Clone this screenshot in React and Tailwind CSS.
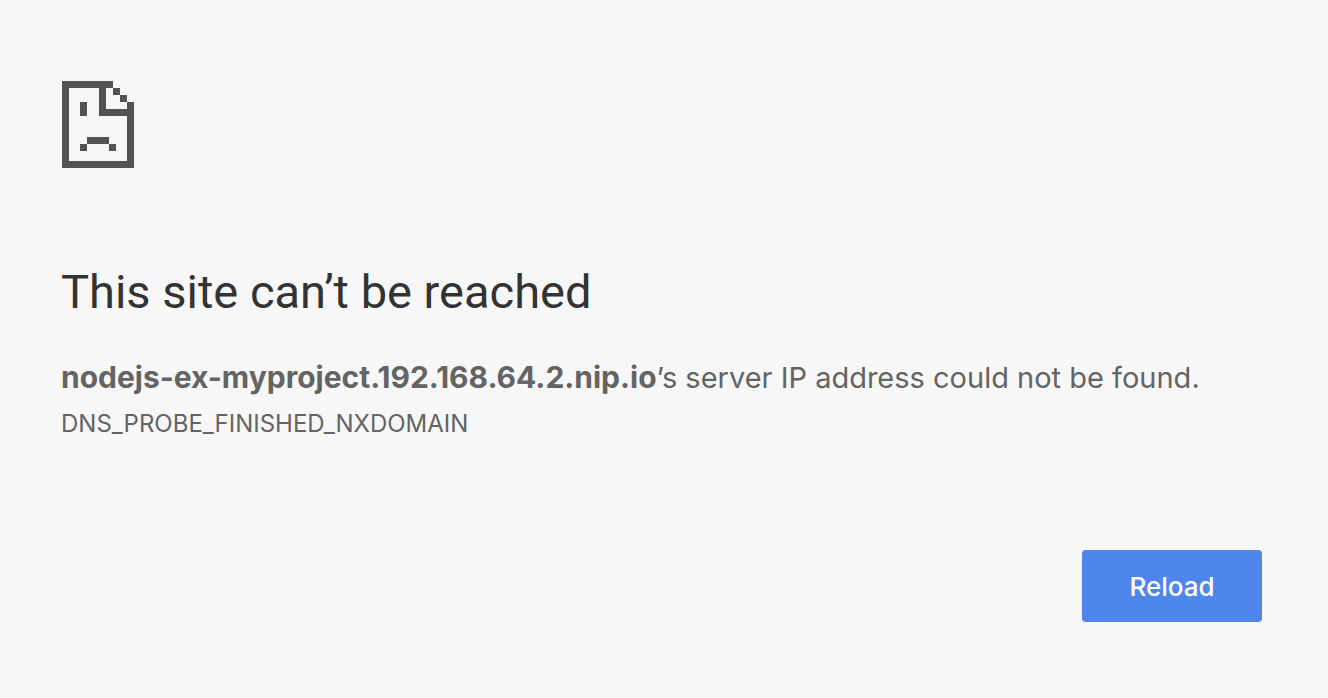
export default function App() {
  return (
    <main className="min-h-screen bg-[#f7f7f7] pt-20 pr-[66px] pb-19 pl-[61px] font-['Inter',sans-serif] text-[#646464]">
      <svg className="ml-px block h-[88px] w-[72px]" viewBox="0 0 72 88" fill="#535353" shapeRendering="crispEdges" aria-hidden="true">
        <path d="M0 1h51v7H7v73h58V36H37V8h7v21h21v-7h7v66H0zM51 8h7v7h-7zM58 15h7v7h-7zM18 22h7v14h-7zM25 57h22v7H25zM18 64h7v7h-7zM47 64h7v7h-7z" />
      </svg>
      <h1 className="mt-24 font-['Roboto',sans-serif] text-[47px] leading-14 text-[#333333]">This site can’t be reached</h1>
      <p className="mt-[37px] text-[29px] leading-10">
        <strong className="text-[30px] font-bold">nodejs-ex-myproject.192.168.64.2.nip.io</strong>’s server IP address could not be found.
      </p>
      <p className="mt-1.5 text-2xl leading-10">DNS_PROBE_FINISHED_NXDOMAIN</p>
      <div className="mt-[106px] flex justify-end">
        <button type="button" className="h-18 w-45 rounded bg-[#4f86ec] text-[26px] font-medium text-white">Reload</button>
      </div>
    </main>
  );
}
